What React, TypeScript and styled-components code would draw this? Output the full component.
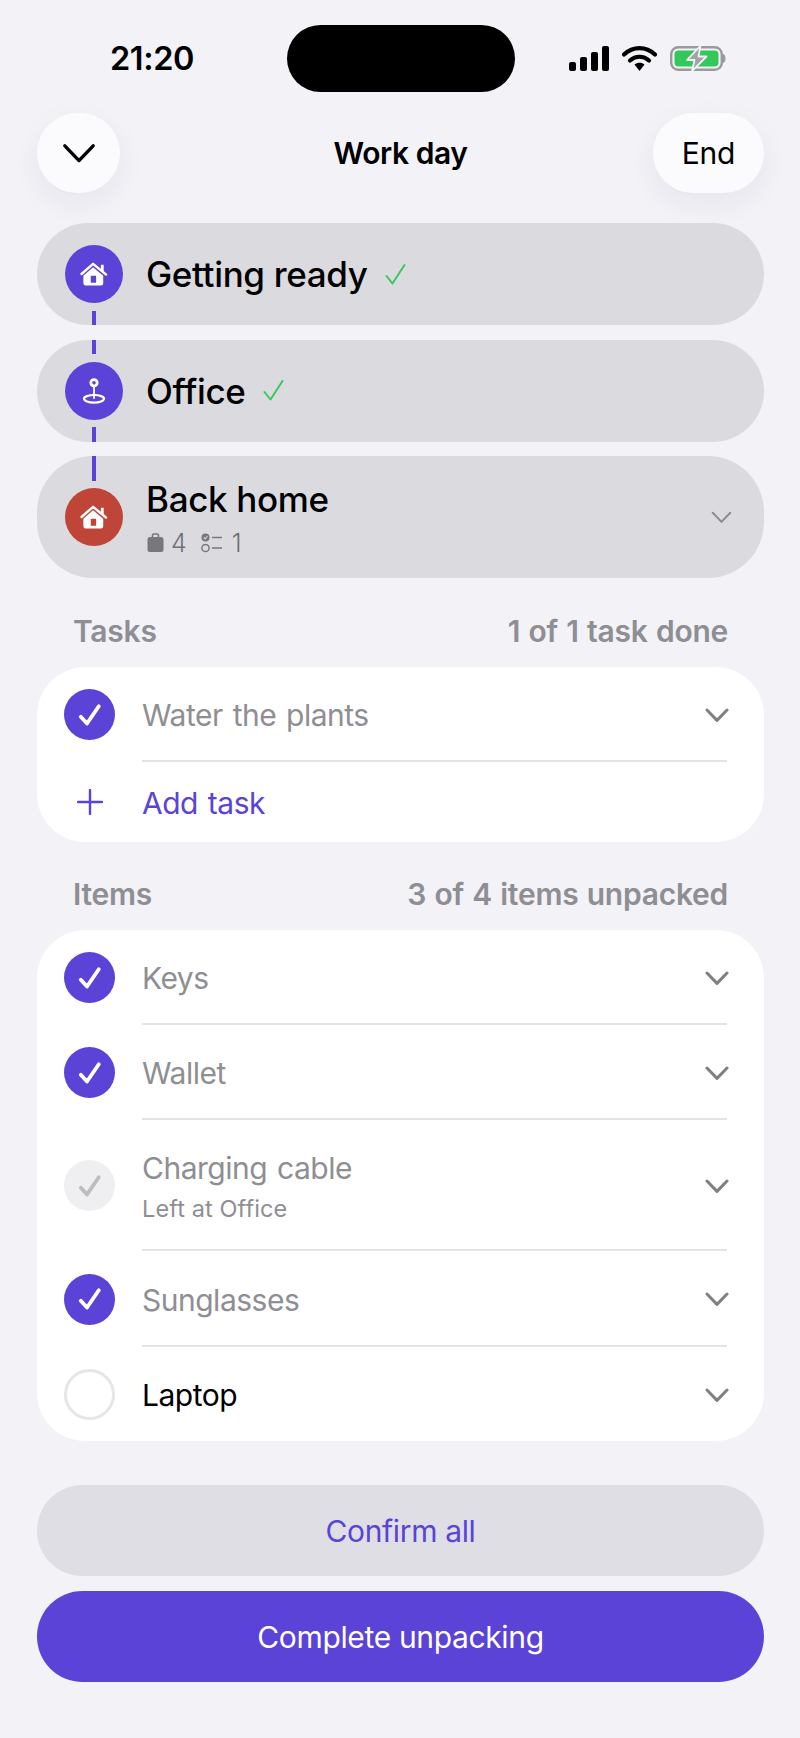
import React from "react";
import styled, { createGlobalStyle } from "styled-components";

const PURPLE = "#5a43d6";
const GREY = "#8e8e93";

const Global = createGlobalStyle`
  html, body { margin: 0; padding: 0; background: #f2f2f7; }
  body { font-family: Inter, "Liberation Sans", sans-serif; -webkit-font-smoothing: antialiased; }
`;

const Page = styled.div`
  width: 800px;
  height: 1738px;
  box-sizing: border-box;
  padding: 25px 36px 0 37px;
  background: #f2f2f7;
  display: flex;
  flex-direction: column;
`;

const StatusBar = styled.div`
  height: 67px;
  display: grid;
  grid-template-columns: 1fr 228px 1fr;
  margin-bottom: 21px;
`;
const Time = styled.div`
  font-size: 32.5px;
  font-weight: 600;
  color: #000;
  padding-left: 73px;
  line-height: 67px;
  letter-spacing: -0.4px;
`;
const Island = styled.div`
  background: #000;
  border-radius: 34px;
`;
const StatusIcons = styled.div`
  display: flex;
  align-items: center;
  gap: 13px;
  padding-left: 54px;
  margin-top: -1px;
`;

const Nav = styled.div`
  height: 80px;
  display: grid;
  grid-template-columns: 1fr auto 1fr;
  align-items: center;
  margin-bottom: 30px;
`;
const RoundButton = styled.button<{ $wide?: boolean }>`
  height: 80px;
  min-width: 83px;
  padding: 0 ${(p) => (p.$wide ? "29px" : "0")};
  border: 0;
  border-radius: 40px;
  background: #fbfbfe;
  box-shadow: 0 10px 30px rgba(40, 40, 70, 0.06);
  display: flex;
  align-items: center;
  justify-content: center;
  justify-self: ${(p) => (p.$wide ? "end" : "start")};
  font: 400 30px Inter, sans-serif;
  letter-spacing: -0.3px;
  color: #000;
`;
const NavTitle = styled.div`
  font-size: 30px;
  font-weight: 600;
  letter-spacing: -0.45px;
  color: #000;
`;

const Stops = styled.div`
  display: flex;
  flex-direction: column;
  gap: 14.5px;
  position: relative;
  margin-bottom: 1px;
`;
const Stop = styled.div<{ $tall?: boolean }>`
  height: ${(p) => (p.$tall ? "122px" : "102px")};
  border-radius: ${(p) => (p.$tall ? "56px" : "51px")};
  background: #dbdbdf;
  display: flex;
  align-items: center;
  padding: 0 32px 0 28px;
  position: relative;
`;
const StopIcon = styled.div<{ $color: string }>`
  width: 58px;
  height: 58px;
  border-radius: 50%;
  background: ${(p) => p.$color};
  display: flex;
  align-items: center;
  justify-content: center;
  flex: none;
  margin-right: 23px;
`;
const StopBody = styled.div`
  flex: 1;
  display: flex;
  flex-direction: column;
`;
const StopTitleRow = styled.div`
  display: flex;
  align-items: center;
  gap: 17px;
`;
const StopTitle = styled.div`
  font-size: 35px;
  font-weight: 500;
  letter-spacing: -0.35px;
  line-height: 44px;
  color: #000;
`;
const StopMeta = styled.div`
  display: flex;
  align-items: center;
  font-size: 25px;
  font-weight: 300;
  color: #6f6f74;
  line-height: 30px;
  margin-top: 7px;
  padding-left: 1px;
`;
const MetaCount = styled.span`
  margin: 0 14px 0 7px;
`;
const Dash = styled.div<{ $top: number; $height: number }>`
  position: absolute;
  left: 55px;
  top: ${(p) => p.$top}px;
  height: ${(p) => p.$height}px;
  width: 4px;
  background: ${PURPLE};
`;

const SectionHead = styled.div`
  height: 88px;
  box-sizing: border-box;
  padding: 35px 36px 0 36px;
  display: flex;
  justify-content: space-between;
  font-size: 30px;
  font-weight: 600;
  line-height: 34px;
  letter-spacing: -0.25px;
  word-spacing: 1px;
  color: ${GREY};
`;
const Card = styled.div`
  background: #fff;
  border-radius: 48px;
  display: flex;
  flex-direction: column;
`;
const Row = styled.div<{ $height: number }>`
  height: ${(p) => p.$height}px;
  display: flex;
  align-items: center;
  position: relative;
  padding-left: 27px;
  flex: none;
`;
const Box = styled.div<{ $state: "done" | "left" | "open" }>`
  width: 51px;
  height: 51px;
  box-sizing: border-box;
  border-radius: 50%;
  flex: none;
  display: flex;
  align-items: center;
  justify-content: center;
  background: ${(p) => (p.$state === "done" ? PURPLE : p.$state === "left" ? "#efeff1" : "#fff")};
  border: ${(p) => (p.$state === "open" ? "3px solid #e6e6e8" : "0")};
`;
const PlusSlot = styled.div`
  width: 51px;
  height: 51px;
  flex: none;
  display: flex;
  align-items: center;
  justify-content: center;
`;
const RowBody = styled.div<{ $line?: boolean }>`
  flex: 1;
  align-self: stretch;
  margin-left: 27px;
  margin-right: 37px;
  padding-top: ${(p) => (p.$line ? "3px" : "2px")};
  display: flex;
  align-items: center;
  justify-content: space-between;
  border-bottom: ${(p) => (p.$line ? "2px solid #e4e4e6" : "0")};
`;
const RowText = styled.div`
  display: flex;
  flex-direction: column;
`;
const RowLabel = styled.div<{ $tone: "muted" | "dark" | "accent" }>`
  font-size: 30px;
  font-weight: 400;
  line-height: 36px;
  letter-spacing: -0.5px;
  word-spacing: 2px;
  color: ${(p) => (p.$tone === "muted" ? GREY : p.$tone === "dark" ? "#000" : PURPLE)};
`;
const RowNote = styled.div`
  font-size: 23.5px;
  line-height: 30px;
  letter-spacing: 0.1px;
  margin: 8px 0 -2px;
  color: ${GREY};
`;
const Chevron = styled.svg<{ $out?: number }>`
  flex: none;
  margin-right: ${(p) => (p.$out ? -p.$out : 0)}px;
`;
const Actions = styled.div`
  display: flex;
  flex-direction: column;
  gap: 15px;
  margin-top: 44px;
`;
const Action = styled.button<{ $primary?: boolean }>`
  height: 91px;
  border: 0;
  border-radius: 46px;
  background: ${(p) => (p.$primary ? PURPLE : "#dedee4")};
  color: ${(p) => (p.$primary ? "#fff" : PURPLE)};
  font: 400 30px Inter, sans-serif;
  letter-spacing: -0.35px;
`;

const Check = ({ color = "#fff" }: { color?: string }) => (
  <svg width="24" height="24" viewBox="0 0 24 24" fill="none">
    <path d="M2.8 13.8 L9 20.5 L20.8 3.2" stroke={color} strokeWidth="3.8" strokeLinecap="round" strokeLinejoin="round" />
  </svg>
);
const Down = ({ size = 24, color = "#7f7f84", w = 3, out = 0 }: { size?: number; color?: string; w?: number; out?: number }) => (
  <Chevron $out={out} width={size} height={size * 0.6} viewBox="0 0 24 14.4" fill="none">
    <path d="M2 2 L12 12.4 L22 2" stroke={color} strokeWidth={w} strokeLinecap="round" strokeLinejoin="round" />
  </Chevron>
);
const Home = () => (
  <svg width="28" height="24" viewBox="0 0 30 26" fill="none">
    <path d="M1.5 13 L14 2 L28 13.5" stroke="#fff" strokeWidth="2.6" strokeLinecap="round" strokeLinejoin="round" />
    <path d="M22.5 3 h3 v7 h-3z" fill="#fff" />
    <path fillRule="evenodd" clipRule="evenodd" d="M14 5.8 L25 14.8 V23 a2.5 2.5 0 0 1-2.5 2.5 H6 a2.5 2.5 0 0 1-2.5-2.5 V14.8Z M11.5 15 h5.8 v7.5 h-5.8Z" fill="#fff" />
  </svg>
);
const Pin = () => (
  <svg width="24" height="26" viewBox="0 0 24 26" fill="none">
    <circle cx="12" cy="4.8" r="3.2" fill="#5a43d6" stroke="#fff" strokeWidth="2.8" />
    <path d="M12 9 V20" stroke="#fff" strokeWidth="1.8" strokeLinecap="round" />
    <ellipse cx="12" cy="20.8" rx="10" ry="3.8" stroke="#fff" strokeWidth="2.2" />
  </svg>
);
const GreenCheck = () => (
  <svg width="21" height="21" viewBox="0 0 20 21" fill="none">
    <path d="M1 12 L7 19.5 L19 1" stroke="#34c759" strokeWidth="1.9" strokeLinecap="round" strokeLinejoin="round" />
  </svg>
);
const Bag = () => (
  <svg width="17" height="19" viewBox="0 0 17 19" fill="none">
    <path d="M5.5 4 V2.5 a1.5 1.5 0 0 1 1.5-1.5 h3 a1.5 1.5 0 0 1 1.5 1.5 V4" stroke="#77777c" strokeWidth="1.6" />
    <rect x="0.5" y="4" width="16" height="15" rx="2.5" fill="#77777c" />
  </svg>
);
const TaskList = () => (
  <svg width="24" height="20" viewBox="0 0 24 20" fill="none">
    <circle cx="4.5" cy="4.5" r="4" fill="#77777c" />
    <path d="M2.7 4.5 L4.2 6 L6.4 3" stroke="#dbdbdf" strokeWidth="1.1" />
    <circle cx="4.5" cy="15" r="3.6" stroke="#77777c" strokeWidth="1.5" />
    <path d="M11 4.5 H21 M11 15 H21" stroke="#77777c" strokeWidth="1.6" />
  </svg>
);

const Signal = () => (
  <svg width="40" height="25" viewBox="0 0 40 25" fill="#000">
    <rect x="0" y="16" width="7" height="9" rx="2" />
    <rect x="11" y="11" width="7" height="14" rx="2" />
    <rect x="22" y="6" width="7" height="19" rx="2" />
    <rect x="33" y="0" width="7" height="25" rx="2" />
  </svg>
);
const Wifi = () => (
  <svg width="35" height="25" viewBox="0 0 35 25" fill="none">
    <path d="M2 8.5 C11 0 24 0 33 8.5" stroke="#000" strokeWidth="4.2" strokeLinecap="round" />
    <path d="M8 14.5 C13.5 9.5 21.5 9.5 27 14.5" stroke="#000" strokeWidth="4.2" strokeLinecap="round" />
    <path d="M12.5 18.5 L17.5 25 L22.5 18.5 C19.5 16 15.5 16 12.5 18.5Z" fill="#000" />
  </svg>
);
const Battery = () => (
  <svg width="56" height="27" viewBox="0 0 56 27" fill="none">
    <rect x="1.2" y="2.2" width="50.6" height="22.6" rx="7" stroke="#9a9a9e" strokeWidth="2.4" />
    <rect x="4.5" y="5.5" width="44" height="16" rx="4" fill="#34c759" />
    <path d="M53.5 9.5 C55.5 10.5 55.5 16.5 53.5 17.5Z" fill="#9a9a9e" stroke="#9a9a9e" />
    <path d="M30.5 0.8 L17 15 H24.5 L22 26.2 L36.5 11.5 H28.5Z" fill="#a2a2a6" stroke="#f2f2f7" strokeWidth="1.8" strokeLinejoin="round" />
  </svg>
);

type Item = { label: string; state: "done" | "left" | "open"; height: number; note?: string; line?: boolean };
const items: Item[] = [
  { label: "Keys", state: "done", height: 95, line: true },
  { label: "Wallet", state: "done", height: 95, line: true },
  { label: "Charging cable", state: "left", height: 131, note: "Left at Office", line: true },
  { label: "Sunglasses", state: "done", height: 96, line: true },
  { label: "Laptop", state: "open", height: 94 },
];

export default function App() {
  return (
    <Page>
      <Global />
      <StatusBar>
        <Time>21:20</Time>
        <Island />
        <StatusIcons>
          <Signal />
          <Wifi />
          <Battery />
        </StatusIcons>
      </StatusBar>
      <Nav>
        <RoundButton aria-label="Close">
          <Down size={34} color="#000" w={2.4} />
        </RoundButton>
        <NavTitle>Work day</NavTitle>
        <RoundButton $wide>End</RoundButton>
      </Nav>
      <Stops>
        <Stop>
          <StopIcon $color={PURPLE}><Home /></StopIcon>
          <StopBody>
            <StopTitleRow>
              <StopTitle>Getting ready</StopTitle>
              <GreenCheck />
            </StopTitleRow>
          </StopBody>
        </Stop>
        <Stop>
          <StopIcon $color={PURPLE}><Pin /></StopIcon>
          <StopBody>
            <StopTitleRow>
              <StopTitle>Office</StopTitle>
              <GreenCheck />
            </StopTitleRow>
          </StopBody>
        </Stop>
        <Stop $tall>
          <StopIcon $color="#bf4538"><Home /></StopIcon>
          <StopBody>
            <StopTitle>Back home</StopTitle>
            <StopMeta>
              <Bag />
              <MetaCount>4</MetaCount>
              <TaskList />
              <MetaCount>1</MetaCount>
            </StopMeta>
          </StopBody>
          <Down size={21} color="#8a8a8f" w={2.2} />
        </Stop>
        <Dash $top={88} $height={14} />
        <Dash $top={117} $height={14} />
        <Dash $top={204} $height={15} />
        <Dash $top={233} $height={25} />
      </Stops>
      <SectionHead>
        <span>Tasks</span>
        <span>1 of 1 task done</span>
      </SectionHead>
      <Card>
        <Row $height={95}>
          <Box $state="done"><Check /></Box>
          <RowBody $line>
            <RowLabel $tone="muted">Water the plants</RowLabel>
            <Down out={2} />
          </RowBody>
        </Row>
        <Row $height={80}>
          <PlusSlot>
            <svg width="26" height="26" viewBox="0 0 26 26" fill="none">
              <path d="M13 1 V25 M1 13 H25" stroke={PURPLE} strokeWidth="2.4" strokeLinecap="round" />
            </svg>
          </PlusSlot>
          <RowBody>
            <RowLabel $tone="accent">Add task</RowLabel>
          </RowBody>
        </Row>
      </Card>
      <SectionHead>
        <span>Items</span>
        <span>3 of 4 items unpacked</span>
      </SectionHead>
      <Card>
        {items.map((it) => (
          <Row key={it.label} $height={it.height}>
            <Box $state={it.state}>
              {it.state === "done" && <Check />}
              {it.state === "left" && <Check color="#bdbdc0" />}
            </Box>
            <RowBody $line={it.line}>
              <RowText>
                <RowLabel $tone={it.state === "open" ? "dark" : "muted"}>{it.label}</RowLabel>
                {it.note && <RowNote>{it.note}</RowNote>}
              </RowText>
              <Down out={2} />
            </RowBody>
          </Row>
        ))}
      </Card>
      <Actions>
        <Action>Confirm all</Action>
        <Action $primary>Complete unpacking</Action>
      </Actions>
    </Page>
  );
}
